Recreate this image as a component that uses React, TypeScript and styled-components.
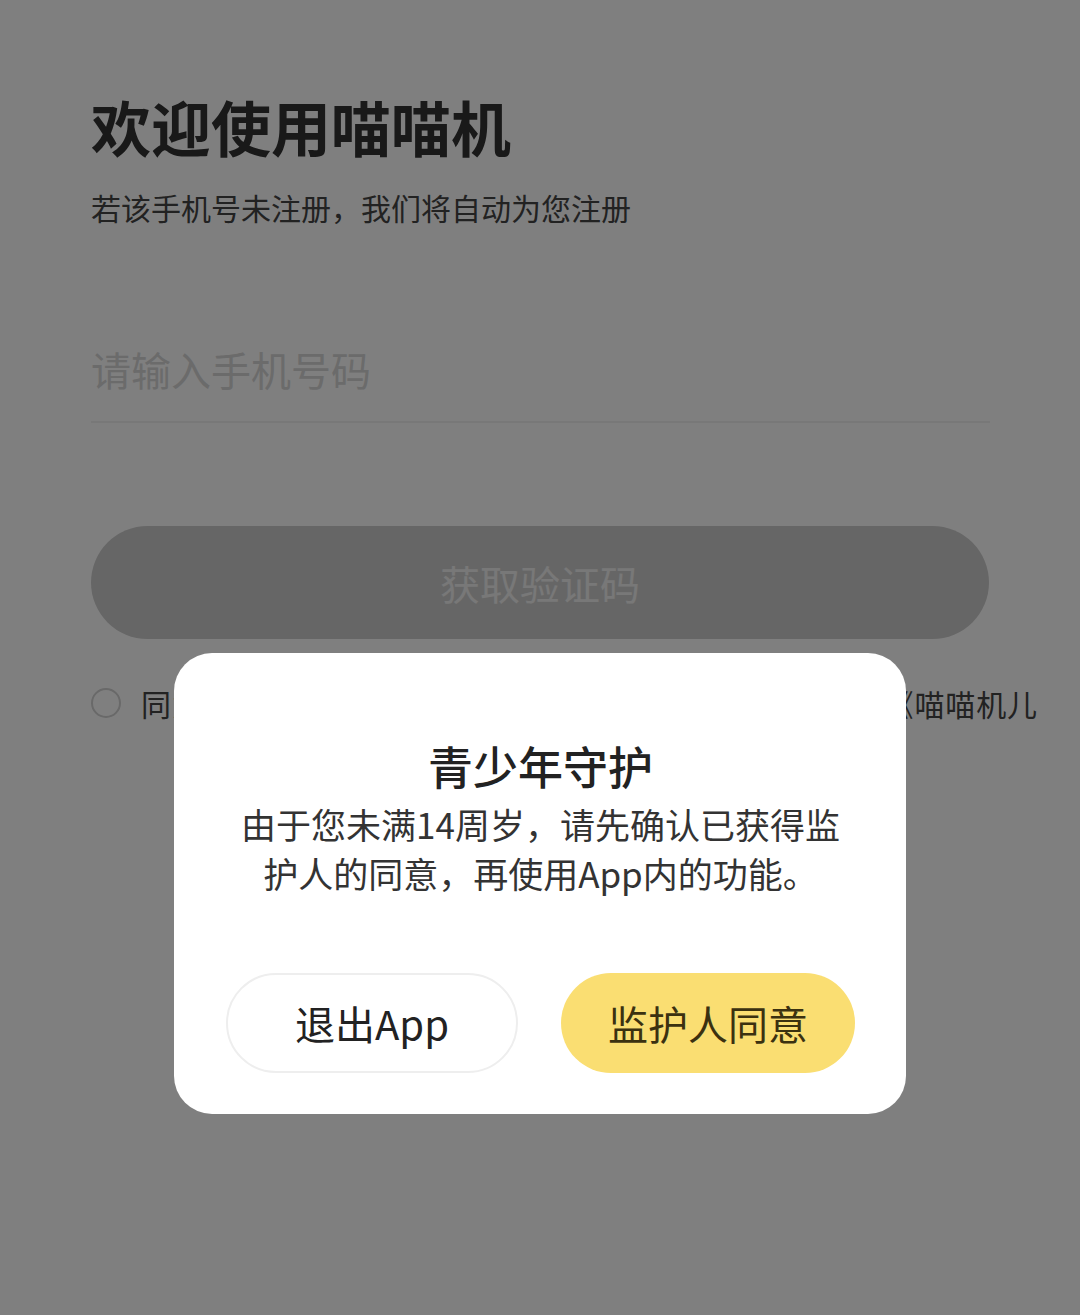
import styled, { createGlobalStyle } from "styled-components";

const GlobalStyle = createGlobalStyle`
  html, body {
    margin: 0;
    padding: 0;
    background: #ffffff;
    font-family: "Noto Sans CJK SC", "Noto Sans", sans-serif;
  }
  * { box-sizing: border-box; }
`;

const Page = styled.div`
  width: 1080px;
  height: 1315px;
  padding: 90px 90px 0 91px;
  background: #ffffff;
  overflow: hidden;
`;

const Title = styled.h1`
  margin: 0;
  font-size: 60px;
  line-height: 72px;
  font-weight: 700;
  color: #333333;
`;

const Subtitle = styled.p`
  margin: 25px 0 0;
  font-size: 30px;
  line-height: 40px;
  color: #444444;
`;

const PhoneField = styled.div`
  margin-top: 118px;
  height: 78px;
  border-bottom: 2px solid #f1f1f1;
  display: flex;
  align-items: flex-start;
`;

const Placeholder = styled.span`
  font-size: 40px;
  line-height: 48px;
  color: #d6d6d6;
`;

const CodeButton = styled.div`
  margin-top: 103px;
  width: 898px;
  height: 113px;
  border-radius: 57px;
  background: #cdcdcd;
  display: flex;
  align-items: center;
  justify-content: center;
  font-size: 40px;
  color: #f1f1f1;
`;

const AgreeRow = styled.div`
  margin-top: 44px;
  width: 946px;
  display: flex;
  align-items: center;
  gap: 20px;
  white-space: nowrap;
  overflow: hidden;
`;

const Radio = styled.span`
  flex: none;
  width: 30px;
  height: 30px;
  border-radius: 50%;
  border: 2px solid #d2d2d2;
`;

const AgreeText = styled.span`
  font-size: 30px;
  line-height: 40px;
  letter-spacing: 0.9px;
  color: #444444;
`;

const Overlay = styled.div`
  position: fixed;
  inset: 0;
  background: rgba(0, 0, 0, 0.5);
  display: flex;
  justify-content: center;
  align-items: flex-start;
  padding-top: 653px;
`;

const Dialog = styled.div`
  width: 732px;
  background: #ffffff;
  border-radius: 38px;
  padding: 86px 51px 41px 52px;
  display: flex;
  flex-direction: column;
  align-items: center;
`;

const DialogTitle = styled.h2`
  margin: 0;
  font-size: 45px;
  line-height: 54px;
  font-weight: 500;
  color: #222222;
`;

const DialogBody = styled.p`
  margin: 6px 0 0;
  font-size: 35px;
  line-height: 49px;
  color: #333333;
  text-align: center;
`;

const Actions = styled.div`
  margin-top: 76px;
  width: 100%;
  display: grid;
  grid-template-columns: 292px 294px;
  justify-content: space-between;
`;

const ActionButton = styled.div<{ $primary?: boolean }>`
  height: 100px;
  border-radius: 50px;
  display: flex;
  align-items: center;
  justify-content: center;
  font-size: 40px;
  color: ${(p) => (p.$primary ? "#3b3110" : "#222222")};
  background: ${(p) => (p.$primary ? "#fade72" : "#ffffff")};
  border: ${(p) => (p.$primary ? "none" : "2px solid #eeeeee")};
`;

export default function App() {
  return (
    <>
      <GlobalStyle />
      <Page>
        <Title>欢迎使用喵喵机</Title>
        <Subtitle>若该手机号未注册，我们将自动为您注册</Subtitle>
        <PhoneField>
          <Placeholder>请输入手机号码</Placeholder>
        </PhoneField>
        <CodeButton>获取验证码</CodeButton>
        <AgreeRow>
          <Radio />
          <AgreeText>同意《用户服务协议》《隐私政策》《儿童隐私政策》和《喵喵机儿童个人信息保护规则》</AgreeText>
        </AgreeRow>
      </Page>
      <Overlay>
        <Dialog>
          <DialogTitle>青少年守护</DialogTitle>
          <DialogBody>
            由于您未满14周岁，请先确认已获得监
            <br />
            护人的同意，再使用App内的功能。
          </DialogBody>
          <Actions>
            <ActionButton>退出App</ActionButton>
            <ActionButton $primary>监护人同意</ActionButton>
          </Actions>
        </Dialog>
      </Overlay>
    </>
  );
}
